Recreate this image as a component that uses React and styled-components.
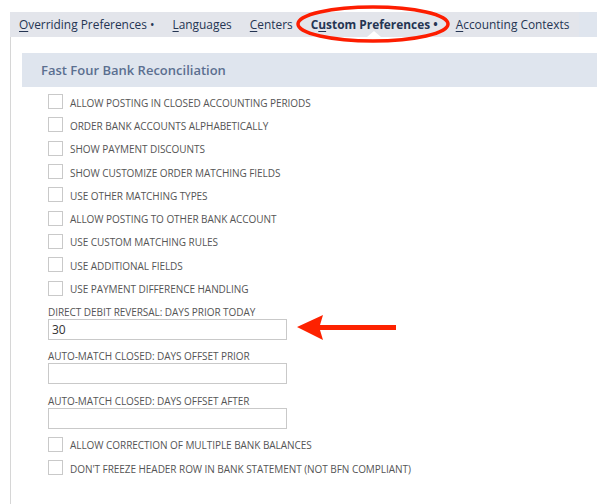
import React from 'react';
import styled, { createGlobalStyle } from 'styled-components';

const GlobalStyle = createGlobalStyle`
  html, body {
    margin: 0;
    padding: 0;
    background: #ffffff;
  }
  body {
    font-family: 'Open Sans', 'Liberation Sans', sans-serif;
  }
`;

const Page = styled.div`
  position: relative;
  width: 597px;
  height: 504px;
  overflow: hidden;
  padding: 12px 0 0 10px;
  box-sizing: border-box;
`;

const TabBar = styled.div`
  display: flex;
  height: 25px;
  background: #dfe5ee;
`;

const TabList = styled.div`
  display: flex;
  align-items: center;
  gap: 18px;
  padding: 0 10px 0 9px;
  background: #e3e5eb;
`;

const Tab = styled.div`
  position: relative;
  font-size: 11.9px;
  color: #253553;
  font-weight: ${(p) => (p.$active ? 700 : 400)};
  white-space: nowrap;
  line-height: 25px;

  u {
    text-decoration: underline;
    text-underline-offset: 2px;
  }

  ${(p) =>
    p.$active &&
    `
    &::after {
      content: '';
      position: absolute;
      left: 50%;
      bottom: 0;
      margin-left: -7px;
      border-left: 7px solid transparent;
      border-right: 7px solid transparent;
      border-bottom: 6px solid #ffffff;
    }
  `}
`;

const Content = styled.div`
  border-left: 1px solid #d6d6d6;
  padding: 16px 0 40px 11px;
  min-height: 460px;
`;

const Section = styled.div`
  display: flex;
  flex-direction: column;
`;

const SectionHeader = styled.div`
  height: 34px;
  display: flex;
  align-items: center;
  padding-left: 19px;
  background: #dfe5ee;
  color: #5b6f90;
  font-size: 13px;
  font-weight: 600;
`;

const Fields = styled.div`
  display: flex;
  flex-direction: column;
  padding: 4px 0 0 26px;
`;

const CheckRow = styled.label`
  display: flex;
  align-items: center;
  gap: 7px;
  height: 23.3px;
`;

const Box = styled.span`
  width: 13px;
  height: 13px;
  border: 1px solid #c9c9c9;
  background: #ffffff;
  flex: none;
  margin-top: -2px;
`;

const Label = styled.span`
  font-size: 10px;
  line-height: 14px;
  color: #555555;
  text-transform: uppercase;
  letter-spacing: -0.05px;
`;

const FieldBlock = styled.div`
  display: flex;
  flex-direction: column;
  margin: ${(p) => p.$top || 0}px 0 0;
`;

const TextInput = styled.div`
  width: 234px;
  height: 19px;
  border: 1px solid #c9c9c9;
  font-size: 12px;
  color: #333333;
  padding-left: 3px;
  line-height: 19px;
`;

const Ring = styled.svg`
  position: absolute;
  left: 294px;
  top: 3px;
`;

const Arrow = styled.svg`
  position: absolute;
  left: 294px;
  top: 314px;
`;

const topChecks = [
  'Allow posting in closed accounting periods',
  'Order bank accounts alphabetically',
  'Show payment discounts',
  'Show customize order matching fields',
  'Use other matching types',
  'Allow posting to other bank account',
  'Use custom matching rules',
  'Use additional fields',
  'Use payment difference handling',
];

const numberFields = [
  { label: 'Direct debit reversal: days prior today', value: '30', top: 4 },
  { label: 'Auto-match closed: days offset prior', value: '', top: 9 },
  { label: 'Auto-match closed: days offset after', value: '', top: 10 },
];

const bottomChecks = [
  'Allow correction of multiple bank balances',
  "Don't freeze header row in bank statement (not BFN compliant)",
];

const Check = ({ text }) => (
  <CheckRow>
    <Box />
    <Label>{text}</Label>
  </CheckRow>
);

const App = () => {
  return (
    <>
      <GlobalStyle />
      <Page>
        <TabBar>
          <TabList>
            <Tab>
              <u>O</u>verriding Preferences •
            </Tab>
            <Tab>
              <u>L</u>anguages
            </Tab>
            <Tab>
              <u>C</u>enters
            </Tab>
            <Tab $active>
              C<u>u</u>stom Preferences •
            </Tab>
            <Tab>
              <u>A</u>ccounting Contexts
            </Tab>
          </TabList>
        </TabBar>
        <Content>
          <Section>
            <SectionHeader>Fast Four Bank Reconciliation</SectionHeader>
            <Fields>
              {topChecks.map((t) => (
                <Check key={t} text={t} />
              ))}
              {numberFields.map((f) => (
                <FieldBlock key={f.label} $top={f.top}>
                  <Label>{f.label}</Label>
                  <TextInput>{f.value}</TextInput>
                </FieldBlock>
              ))}
              <div style={{ height: 5 }} />
              {bottomChecks.map((t) => (
                <Check key={t} text={t} />
              ))}
            </Fields>
          </Section>
        </Content>

        {/* highlight around the active tab */}
        <Ring width="160" height="42" viewBox="0 0 160 42">
          <ellipse cx="79" cy="21" rx="75" ry="17" fill="none" stroke="#fd1d00" strokeWidth="3.5" />
        </Ring>

        {/* pointer to the reversal field */}
        <Arrow width="106" height="28" viewBox="0 0 106 28">
          <polygon points="3,13 29,1 26,11 102,11 102,16 26,16 29,26" fill="#fd2200" />
        </Arrow>
      </Page>
    </>
  );
};

export default App;
